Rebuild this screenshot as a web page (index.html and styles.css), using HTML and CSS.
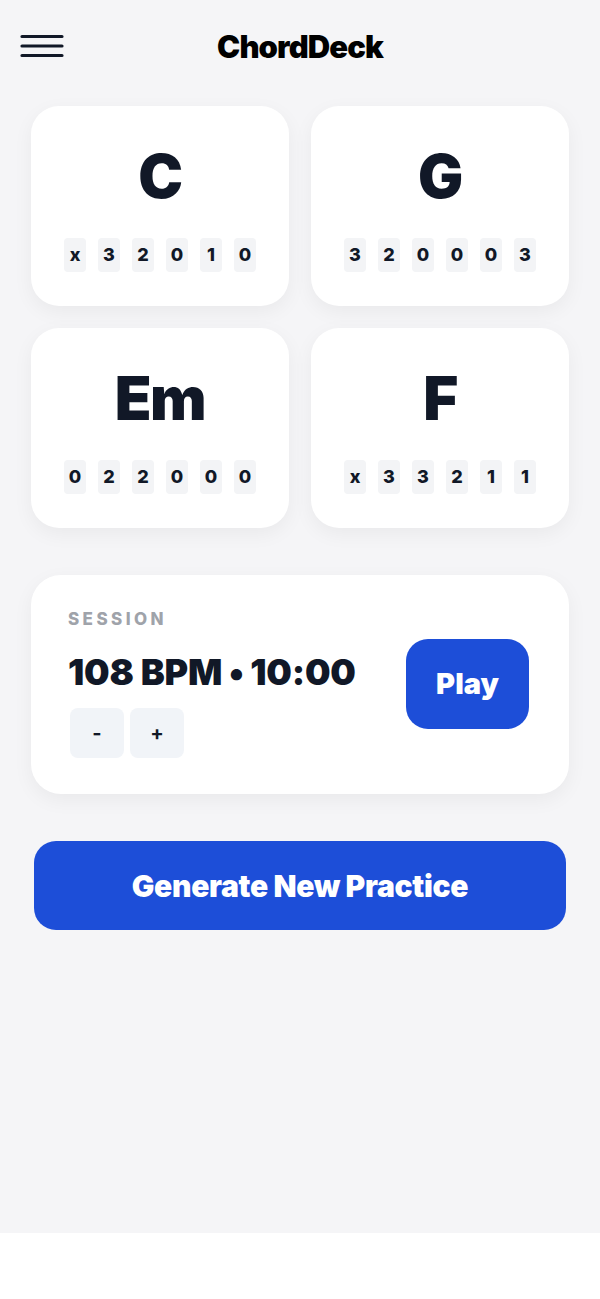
FILE: index.html
```html
<!DOCTYPE html>
<html>
<head>
    <title>ChordDeck</title>
    <link rel="stylesheet" href="styles.css">
</head>
<body>
    <div id="app">
        <header class="top-bar">
            <button class="menu-button" aria-label="Menu">
                <svg width="44" height="24" viewBox="0 0 44 24">
                    <path d="M2 2.5H42M2 12H42M2 21.5H42" stroke="#111827" stroke-width="3.2" stroke-linecap="round"/>
                </svg>
            </button>
            <h1 class="title">ChordDeck</h1>
            <span class="spacer"></span>
        </header>

        <div class="chord-grid">
            <div class="chord-card">
                <div class="chord-name">C</div>
                <div class="frets">
                    <span class="fret">x</span><span class="fret">3</span><span class="fret">2</span><span class="fret">0</span><span class="fret">1</span><span class="fret">0</span>
                </div>
            </div>
            <div class="chord-card">
                <div class="chord-name">G</div>
                <div class="frets">
                    <span class="fret">3</span><span class="fret">2</span><span class="fret">0</span><span class="fret">0</span><span class="fret">0</span><span class="fret">3</span>
                </div>
            </div>
            <div class="chord-card">
                <div class="chord-name">Em</div>
                <div class="frets">
                    <span class="fret">0</span><span class="fret">2</span><span class="fret">2</span><span class="fret">0</span><span class="fret">0</span><span class="fret">0</span>
                </div>
            </div>
            <div class="chord-card">
                <div class="chord-name">F</div>
                <div class="frets">
                    <span class="fret">x</span><span class="fret">3</span><span class="fret">3</span><span class="fret">2</span><span class="fret">1</span><span class="fret">1</span>
                </div>
            </div>
        </div>

        <div class="session-card">
            <div class="session-info">
                <p class="session-label">SESSION</p>
                <p class="session-stats">108 BPM &bull; 10:00</p>
                <div class="tempo-buttons">
                    <button class="tempo-button">-</button>
                    <button class="tempo-button">+</button>
                </div>
            </div>
            <button class="play-button">Play</button>
        </div>

        <button class="generate-button">Generate New Practice</button>
    </div>
</body>
</html>
```

FILE: styles.css
```css
body {
    font-family: Inter, "Noto Sans", sans-serif;
    background-color: #fff;
    margin: 0;
    padding: 0;
    color: #111827;
}

#app {
    background-color: #f5f5f7;
    height: 1233px;
    padding: 0 31px;
    box-sizing: border-box;
}

button {
    font-family: inherit;
    border: none;
    cursor: pointer;
}

.top-bar {
    display: flex;
    align-items: center;
    justify-content: space-between;
    height: 92px;
    margin: 0 -11px;
}

.menu-button {
    background: none;
    padding: 0;
    width: 44px;
    height: 24px;
    display: flex;
}

.spacer {
    width: 44px;
}

.title {
    font-size: 31px;
    font-weight: 900;
    letter-spacing: -0.9px;
    color: #000;
    margin: 0;
}

.chord-grid {
    display: grid;
    grid-template-columns: 1fr 1fr;
    gap: 22px;
    margin-top: 14px;
}

.chord-card {
    background-color: #fff;
    border-radius: 28px;
    height: 200px;
    box-shadow: 0 6px 20px rgba(0, 0, 0, 0.05);
    display: flex;
    flex-direction: column;
    align-items: center;
}

.chord-name {
    font-size: 60px;
    font-weight: 900;
    line-height: 1;
    margin-top: 40px;
    letter-spacing: -1.5px;
    color: #111827;
}

.frets {
    display: flex;
    gap: 12px;
    margin-top: 32px;
}

.fret {
    width: 22px;
    height: 34px;
    line-height: 34px;
    text-align: center;
    background-color: #f3f4f6;
    border-radius: 4px;
    font-size: 18px;
    font-weight: 800;
}

.session-card {
    background-color: #fff;
    border-radius: 30px;
    height: 219px;
    margin-top: 47px;
    box-shadow: 0 6px 20px rgba(0, 0, 0, 0.05);
    display: flex;
    align-items: center;
    justify-content: space-between;
    padding: 0 40px 0 37px;
    box-sizing: border-box;
}

.session-info {
    padding-top: 0;
}

.session-label {
    margin: 0;
    font-size: 17px;
    font-weight: 800;
    letter-spacing: 3.4px;
    color: #9fa3aa;
    line-height: 1;
}

.session-stats {
    margin: 26px 0 0;
    font-size: 36px;
    font-weight: 900;
    letter-spacing: -0.2px;
    line-height: 1;
}

.tempo-buttons {
    display: flex;
    gap: 6px;
    margin-top: 18px;
    padding-left: 2px;
}

.tempo-button {
    width: 54px;
    height: 50px;
    background-color: #f1f4f8;
    border-radius: 8px;
    font-size: 20px;
    font-weight: 700;
    color: #111827;
}

.play-button {
    width: 123px;
    height: 90px;
    background-color: #1d4ed8;
    border-radius: 22px;
    color: #fff;
    font-size: 29px;
    font-weight: 900;
    margin-bottom: 2px;
}

.generate-button {
    display: block;
    width: 532px;
    height: 89px;
    margin: 47px 0 0 3px;
    background-color: #1d4ed8;
    border-radius: 22px;
    color: #fff;
    font-size: 30px;
    font-weight: 900;
    letter-spacing: -0.3px;
}
```
